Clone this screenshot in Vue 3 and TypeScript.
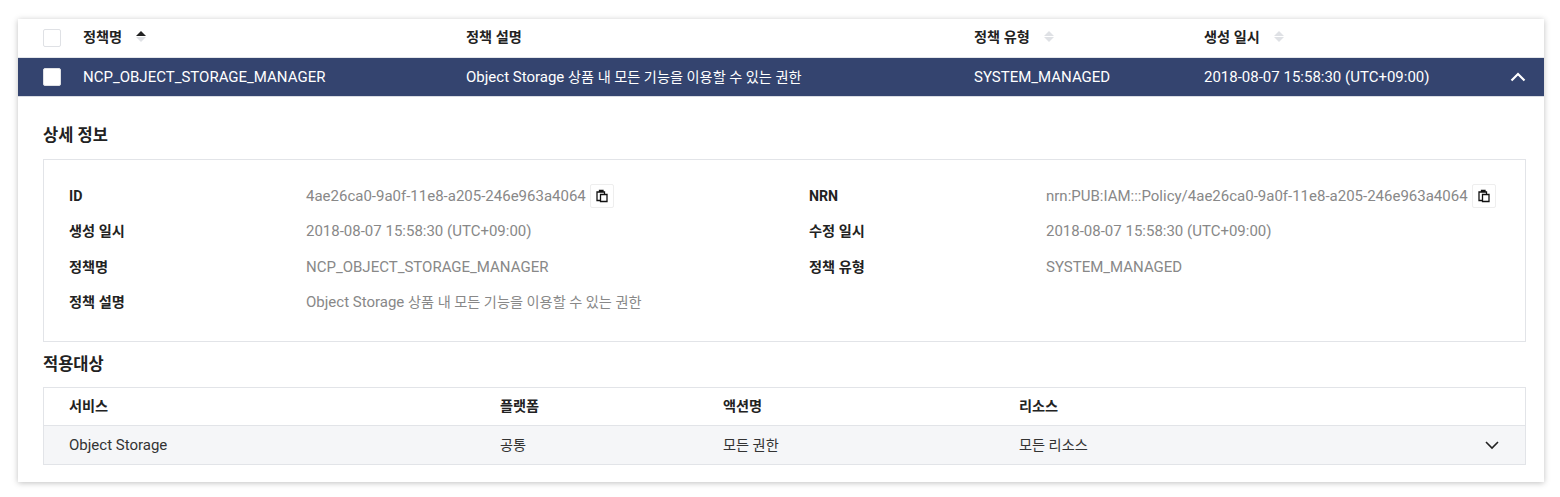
<template>
  <div class="page">
    <div class="card">
      <div class="row head">
        <span class="check"></span>
        <span class="cell ko" v-for="col in columns" :key="col.label">
          {{ col.label }}
          <span v-if="col.sortable" class="sort">
            <i :class="['up', { on: col.active }]"></i>
            <i class="down"></i>
          </span>
        </span>
      </div>
      <div class="row selected">
        <span class="check"></span>
        <span class="cell">NCP_OBJECT_STORAGE_MANAGER</span>
        <span class="cell">Object Storage <span class="ko">{{ descriptionKo }}</span></span>
        <span class="cell">SYSTEM_MANAGED</span>
        <span class="cell">{{ created }}</span>
        <svg class="chevron" width="16" height="10" viewBox="0 0 16 10">
          <path d="M1.5 8.5L8 2l6.5 6.5" fill="none" stroke="#fff" stroke-width="2.2" />
        </svg>
      </div>

      <div class="detail">
        <h3>상세 정보</h3>
        <div class="info">
          <div class="info-row" v-for="row in infoRows" :key="row.label">
            <b class="ko">{{ row.label }}</b>
            <span class="value">
              <span>{{ row.value }} <span v-if="row.valueKo" class="ko">{{ row.valueKo }}</span></span>
              <button v-if="row.copy" class="copy" type="button">
                <svg width="14" height="14" viewBox="0 0 14 14">
                  <path d="M4.5 3V1.5h3.5V3M2 3h7.5v8.5H2z" fill="none" stroke="#111" stroke-width="1.3" />
                  <path d="M5.5 5.5h6.5v7H5.5z" fill="#fff" stroke="#111" stroke-width="1.3" />
                </svg>
              </button>
            </span>
            <b class="ko">{{ row.label2 }}</b>
            <span class="value">
              <span>{{ row.value2 }}</span>
              <button v-if="row.copy" class="copy" type="button">
                <svg width="14" height="14" viewBox="0 0 14 14">
                  <path d="M4.5 3V1.5h3.5V3M2 3h7.5v8.5H2z" fill="none" stroke="#111" stroke-width="1.3" />
                  <path d="M5.5 5.5h6.5v7H5.5z" fill="#fff" stroke="#111" stroke-width="1.3" />
                </svg>
              </button>
            </span>
          </div>
        </div>

        <h3 class="second">적용대상</h3>
        <div class="target">
          <div class="target-row target-head ko">
            <span>서비스</span>
            <span>플랫폼</span>
            <span>액션명</span>
            <span>리소스</span>
          </div>
          <div class="target-row target-body">
            <span>Object Storage</span>
            <span class="ko">공통</span>
            <span class="ko">모든 권한</span>
            <span class="ko">모든 리소스</span>
            <svg class="chevron" width="16" height="10" viewBox="0 0 16 10">
              <path d="M2 2l6 6 6-6" fill="none" stroke="#222" stroke-width="1.6" />
            </svg>
          </div>
        </div>
      </div>
    </div>
  </div>
</template>

<script setup lang="ts">
const descriptionKo = '상품 내 모든 기능을 이용할 수 있는 권한'
const created = '2018-08-07 15:58:30 (UTC+09:00)'
const id = '4ae26ca0-9a0f-11e8-a205-246e963a4064'

const columns = [
  { label: '정책명', sortable: true, active: true },
  { label: '정책 설명', sortable: false, active: false },
  { label: '정책 유형', sortable: true, active: false },
  { label: '생성 일시', sortable: true, active: false }
]

const infoRows = [
  { label: 'ID', value: id, label2: 'NRN', value2: 'nrn:PUB:IAM:::Policy/' + id, copy: true },
  { label: '생성 일시', value: created, label2: '수정 일시', value2: created },
  { label: '정책명', value: 'NCP_OBJECT_STORAGE_MANAGER', label2: '정책 유형', value2: 'SYSTEM_MANAGED' },
  { label: '정책 설명', value: 'Object Storage', valueKo: descriptionKo, label2: '', value2: '' }
]
</script>

<style>
body {
  margin: 0;
  background: #fff;
}
</style>

<style scoped>
.page {
  padding: 19px 16px 15px 18px;
  font-family: Roboto, 'Noto Sans CJK KR', sans-serif;
  font-size: 15px;
  line-height: 20px;
  color: #222;
}

.ko {
  font-size: 14.2px;
}

.card {
  background: #fff;
  box-shadow: 0 1px 6px rgba(0, 0, 0, 0.25);
  height: 463px;
}

.row {
  display: grid;
  grid-template-columns: 65px 383px 508px 230px 1fr;
  align-items: center;
  position: relative;
}

.row.head {
  height: 35px;
  padding-bottom: 3px;
  border-bottom: 1px solid #e4e6ea;
  font-weight: 700;
  color: #222;
}

.row.selected {
  height: 38px;
  background: #34446f;
  color: #fff;
  border-bottom: 1px solid #d9dce3;
}

.check {
  width: 16px;
  height: 16px;
  margin-left: 25px;
  border: 1px solid #dfe1e5;
  border-radius: 2px;
  background: #fff;
}

.head .check {
  position: relative;
  top: 1px;
}

.cell {
  white-space: nowrap;
}

.head .cell {
  display: flex;
  align-items: center;
  gap: 14px;
}

.sort {
  display: flex;
  flex-direction: column;
  gap: 1px;
}

.sort i {
  display: block;
  width: 0;
  height: 0;
  border-left: 5px solid transparent;
  border-right: 5px solid transparent;
}

.sort .up {
  border-bottom: 5px solid #dfe1e5;
}

.sort .up.on {
  border-bottom-color: #222;
}

.sort .down {
  border-top: 5px solid #dfe1e5;
}

.chevron {
  position: absolute;
  right: 18px;
  top: 14px;
}

.detail {
  padding: 0 18px 0 25px;
}

h3 {
  margin: 0;
  padding-top: 28px;
  height: 34px;
  line-height: 21px;
  font-size: 16.5px;
  font-weight: 700;
  color: #222;
}

h3.second {
  padding-top: 12px;
  height: 34px;
}

.info {
  box-sizing: border-box;
  height: 183px;
  padding: 18.4px 25px;
  border: 1px solid #e2e4e8;
}

.info-row {
  display: grid;
  grid-template-columns: 237px 503px 237px 1fr;
  align-items: center;
  height: 35.4px;
}

.info-row b {
  font-weight: 700;
  color: #222;
}

.value {
  display: flex;
  align-items: center;
  gap: 4px;
  color: #888;
  white-space: nowrap;
}

.copy {
  display: inline-flex;
  align-items: center;
  justify-content: center;
  width: 24px;
  height: 24px;
  padding: 0;
  border: 1px solid #eee;
  border-radius: 2px;
  background: #fff;
}

.target {
  border: 1px solid #e2e4e8;
  margin-top: -1px;
}

.target-row {
  display: grid;
  grid-template-columns: 431px 223px 296px 1fr;
  align-items: center;
  padding-left: 25px;
  position: relative;
}

.target-head {
  height: 35px;
  padding-bottom: 2px;
  font-weight: 700;
  border-bottom: 1px solid #e2e4e8;
}

.target-body {
  height: 38px;
  background: #f5f6f8;
  color: #333;
}

.target-body .chevron {
  right: 25px;
  top: 14px;
}
</style>
